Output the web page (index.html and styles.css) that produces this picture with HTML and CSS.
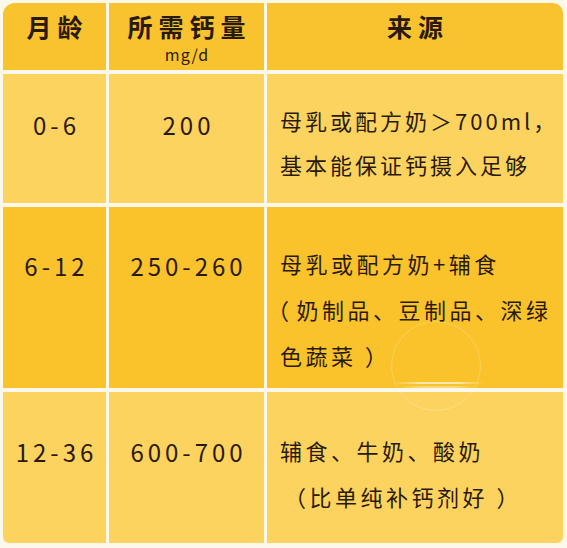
FILE: index.html
```html
<!DOCTYPE html>
<html lang="zh">
<head>
<meta charset="utf-8">
<title>婴幼儿钙需求</title>
<link rel="stylesheet" href="styles.css">
</head>
<body>
<div class="page">
  <div class="table">
    <div class="cell head c-age corner-tl"><span class="htext">月龄</span></div>
    <div class="cell head c-need"><span class="htext">所需钙量</span><span class="unit">mg/d</span></div>
    <div class="cell head c-src corner-tr"><span class="htext">来源</span></div>

    <div class="cell light num r1">0-6</div>
    <div class="cell light num r1">200</div>
    <div class="cell light src r1">母乳或配方奶＞700ml，<br>基本能保证钙摄入足够</div>

    <div class="cell dark num r2">6-12</div>
    <div class="cell dark num r2">250-260</div>
    <div class="cell dark src r2">母乳或配方奶+辅食<br><span class="half">（</span>奶制品、豆制品、深绿<br>色蔬菜 ）</div>

    <div class="cell light num r3 corner-bl">12-36</div>
    <div class="cell light num r3">600-700</div>
    <div class="cell light src r3 corner-br">辅食、牛奶、酸奶<br><span class="indent">（比单纯补钙剂好 ）</span></div>

    <div class="watermark"><span class="wm-line l1"></span><span class="wm-line l2"></span></div>
  </div>
</div>
</body>
</html>
```

FILE: styles.css
```css
html, body {
  margin: 0;
  padding: 0;
  background: #fdf8ec;
}

.page {
  width: 567px;
  height: 548px;
  padding: 3px;
  box-sizing: border-box;
}

.table {
  position: relative;
  display: grid;
  grid-template-columns: 103px 155px 296px;
  grid-template-rows: 67px 129px 181px 151px;
  column-gap: 3px;
  row-gap: 4px;
  font-family: "Noto Sans CJK SC", "Noto Sans", sans-serif;
  color: #2a1a0c;
}

.cell {
  box-sizing: border-box;
}

.head {
  background: #f9c22f;
  display: flex;
  flex-direction: column;
  align-items: center;
  padding-top: 5px;
}

.htext {
  font-size: 25px;
  font-weight: 700;
  line-height: 36px;
  letter-spacing: 6px;
  padding-left: 6px;
}

.unit {
  font-size: 16px;
  line-height: 20px;
  letter-spacing: 1px;
  padding-left: 1px;
}

.light {
  background: #fcd35f;
}

.dark {
  background: #fac32c;
}

.num {
  text-align: center;
  font-size: 24px;
  line-height: 30px;
  letter-spacing: 4px;
  padding-left: 4px;
}

.num.r1 { padding-top: 36px; }
.num.r2 { padding-top: 44px; }
.num.r3 { padding-top: 45px; }

.src {
  font-size: 22px;
  letter-spacing: 3.5px;
  white-space: nowrap;
  padding-left: 13px;
}

.src.r1 { line-height: 44px; padding-top: 24px; letter-spacing: 3px; }
.src.r2 { line-height: 46px; padding-top: 33px; }
.src.r3 { line-height: 46px; padding-top: 35px; }

.half {
  font-feature-settings: "halt";
  margin-left: -2px;
  margin-right: 4px;
}

.indent {
  padding-left: 4px;
}

.corner-tl { border-top-left-radius: 12px; }
.corner-tr { border-top-right-radius: 10px; }
.corner-bl { border-bottom-left-radius: 6px; }
.corner-br { border-bottom-right-radius: 6px; }

.watermark {
  position: absolute;
  left: 388px;
  top: 318px;
  width: 88px;
  height: 88px;
  border-radius: 50%;
  border: 1px solid rgba(255, 255, 255, 0.22);
  pointer-events: none;
}

.wm-line {
  position: absolute;
  height: 2px;
  background: linear-gradient(90deg, rgba(255,255,255,0) 0%, rgba(255,255,255,0.6) 30%, rgba(255,255,255,0.6) 70%, rgba(255,255,255,0) 100%);
}

.wm-line.l1 { left: 2px; top: 60px; width: 90px; }
.wm-line.l2 { left: 6px; top: 64px; width: 80px; opacity: 0.6; }
```
